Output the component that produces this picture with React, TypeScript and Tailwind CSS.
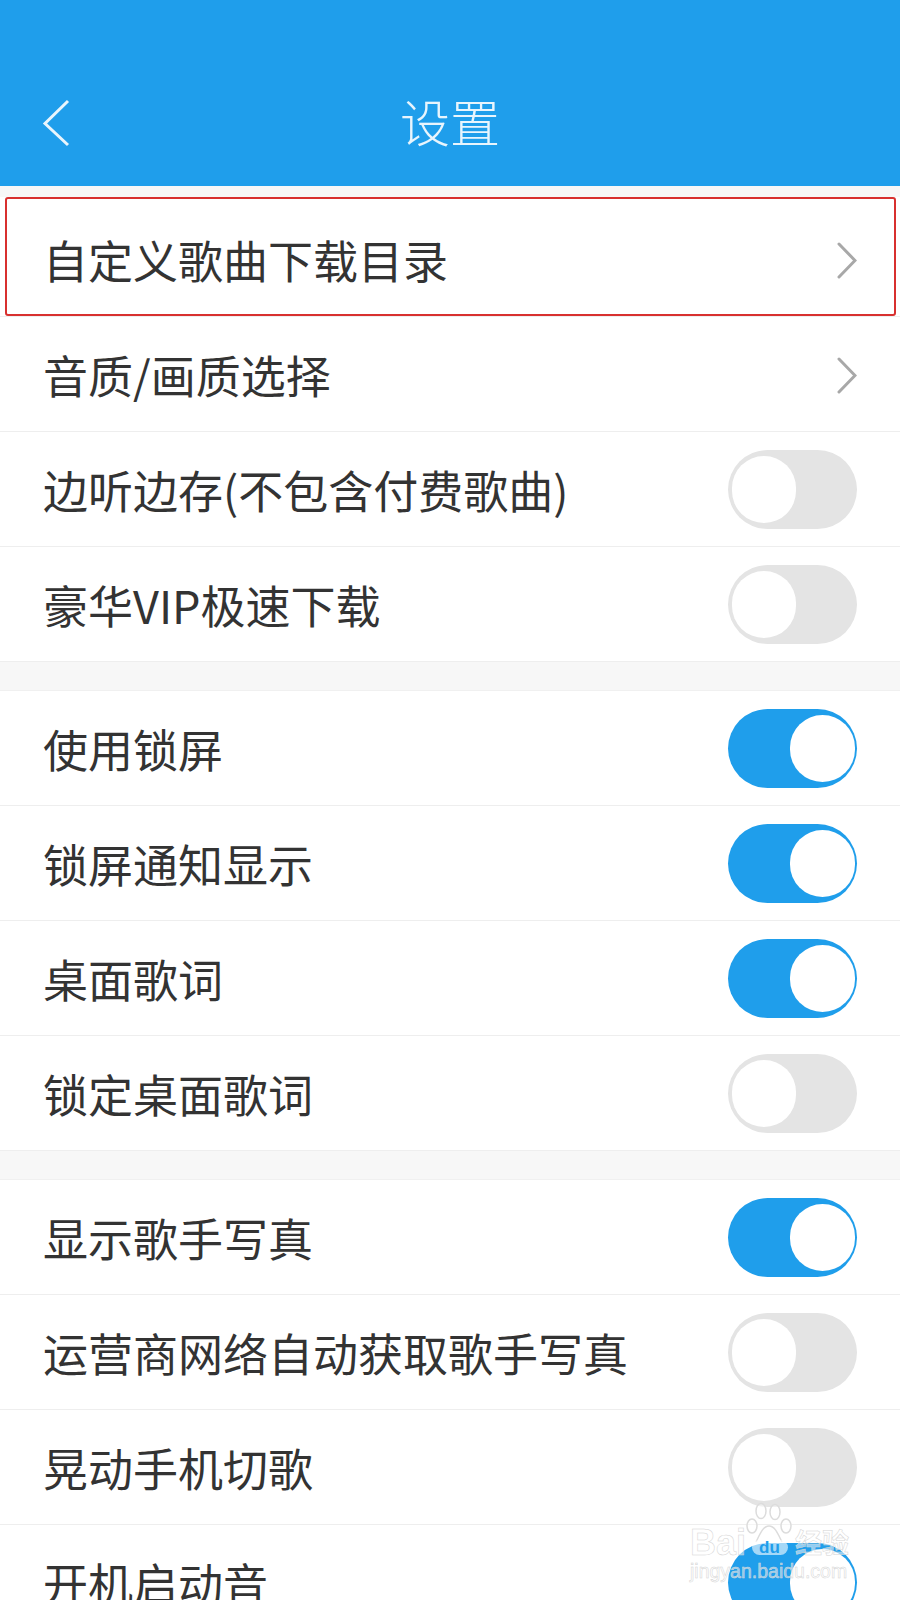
import React from 'react';

const Chevron = () => (
  <svg width="20" height="37" viewBox="0 0 20 37" fill="none" className="mt-[2px]">
    <path d="M2 2L18 18.5L2 35" stroke="#a8a8a8" strokeWidth="3" strokeLinecap="round" />
  </svg>
);

const Toggle = ({ on }: { on: boolean }) =>
  on ? (
    <div className="flex h-[79px] w-[129px] items-center justify-end rounded-full bg-[#1f9eeb] pr-[2px]">
      <div className="h-[67px] w-[65px] rounded-full bg-white" />
    </div>
  ) : (
    <div className="flex h-[79px] w-[129px] items-center rounded-full bg-[#e4e4e4] pl-[4px]">
      <div className="h-[67px] w-[64px] rounded-full bg-white" />
    </div>
  );

const Row = ({ label, children }: { label: string; children: React.ReactNode }) => (
  <div className="flex h-[115px] items-center justify-between border-b border-[#eeeeee] bg-white pl-[43px] pr-[43px]">
    <span className="pt-[1px] text-[45px] leading-none text-[#333333]">{label}</span>
    {children}
  </div>
);

const Gap = () => <div className="h-[29px] border-b border-[#f0f0f0] bg-[#f7f7f7]" />;

// faint site watermark in the bottom right corner
const Watermark = () => (
  <div className="absolute left-[688px] top-[1502px] h-[82px] w-[172px] font-['Liberation_Sans',sans-serif] text-white/50 [-webkit-text-stroke:0.5px_#d4d4d4]">
    <svg width="50" height="44" viewBox="0 0 50 44" fill="#ffffff" fillOpacity="0.4" stroke="#dcdcdc" strokeWidth="1.5" className="absolute left-[55px] top-0">
      <ellipse cx="9" cy="24" rx="5" ry="7" />
      <ellipse cx="18" cy="9" rx="5" ry="7.5" />
      <ellipse cx="32" cy="10" rx="5" ry="7.5" />
      <ellipse cx="43" cy="24" rx="5" ry="7" />
      <path d="M13 40C17 32 20 24 26 24C32 24 35 32 39 40" />
    </svg>
    <div className="absolute left-[64px] top-[38px] h-[15px] w-[36px] rounded-full bg-white/60" />
    <span className="absolute left-[2px] top-[23px] text-[36px] font-bold leading-none">Bai</span>
    <span className="absolute left-[71px] top-[37px] text-[17px] font-bold leading-none text-[#1f9eeb] [-webkit-text-stroke:0]">du</span>
    <span className="absolute left-[107px] top-[26px] font-['Noto_Sans_CJK_SC',sans-serif] text-[27px] font-bold leading-none">经验</span>
    <span className="absolute left-[2px] top-[60px] text-[19.5px] leading-none">jingyan.baidu.com</span>
  </div>
);

export default function App() {
  return (
    <div className="relative h-[1600px] w-[900px] overflow-hidden bg-white font-['Noto_Sans_CJK_SC','Noto_Sans',sans-serif]">
      <header className="flex h-[186px] items-end justify-between bg-[#1f9eeb] px-[42px] pb-[38px]">
        <svg width="28" height="48" viewBox="0 0 28 48" fill="none" className="mb-[1px]">
          <path d="M26 2L3 24.5L26 46" stroke="#e8f5fd" strokeWidth="3" />
        </svg>
        <h1 className="absolute left-0 right-0 top-[88px] text-center text-[50px] font-light leading-[64px] text-[#e8f5fd]">设置</h1>
      </header>
      <div className="h-[11px] bg-[#f7f7f7]" />
      <div className="h-[5px] bg-white" />
      <Row label="自定义歌曲下载目录"><Chevron /></Row>
      <Row label="音质/画质选择"><Chevron /></Row>
      <Row label="边听边存(不包含付费歌曲)"><Toggle on={false} /></Row>
      <Row label="豪华VIP极速下载"><Toggle on={false} /></Row>
      <Gap />
      <Row label="使用锁屏"><Toggle on /></Row>
      <Row label="锁屏通知显示"><Toggle on /></Row>
      <Row label="桌面歌词"><Toggle on /></Row>
      <Row label="锁定桌面歌词"><Toggle on={false} /></Row>
      <Gap />
      <Row label="显示歌手写真"><Toggle on /></Row>
      <Row label="运营商网络自动获取歌手写真"><Toggle on={false} /></Row>
      <Row label="晃动手机切歌"><Toggle on={false} /></Row>
      <Row label="开机启动音"><Toggle on /></Row>
      {/* red annotation box drawn over the first row */}
      <div className="absolute left-[5px] top-[197px] h-[119px] w-[891px] rounded-[3px] border-[2.5px] border-[#d8302f]" />
      <Watermark />
    </div>
  );
}
